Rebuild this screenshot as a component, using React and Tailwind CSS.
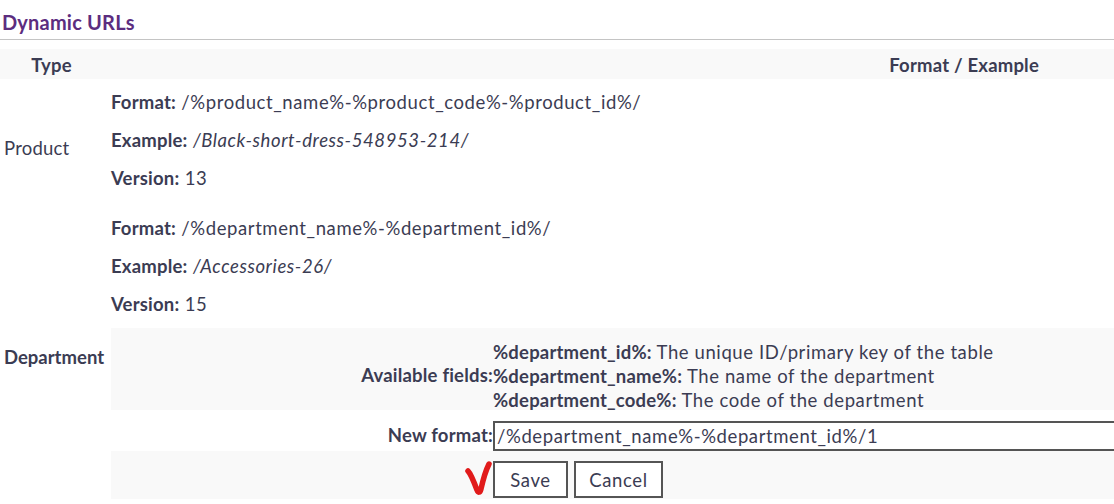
import React from "react";

const labelCls = "font-bold tracking-[0.2px]";

function Line({ label, children }) {
  return (
    <p className="leading-[24px] whitespace-nowrap">
      <span className={labelCls}>{label}</span> {children}
    </p>
  );
}

export default function App() {
  const fields = [
    ["%department_id%", "The unique ID/primary key of the table"],
    ["%department_name%", "The name of the department"],
    ["%department_code%", "The code of the department"],
  ];

  return (
    <div
      className="w-[1114px] h-[504px] overflow-hidden bg-white text-[18.5px] tracking-[0.6px] text-[#3b3c53]"
      style={{ fontFamily: "Lato, 'Noto Sans', sans-serif" }}
    >
      <div className="h-[40px] border-b border-[#c4c4c4] pl-[2px] pt-[9px]">
        <h2 className="text-[20px] font-bold leading-[26px] tracking-[0.2px] text-[#5c2d7f]">Dynamic URLs</h2>
      </div>

      <div className="mt-[9px] h-[30px] bg-[#f9f9f9] flex items-center pt-[4px] font-bold tracking-[0.2px]">
        <div className="w-[103px] shrink-0 text-center">Type</div>
        <div className="flex-1 text-right pr-[75px]">Format / Example</div>
      </div>

      {/* Product row */}
      <div className="flex h-[136px]">
        <div className="w-[107px] shrink-0 pl-[4px] flex items-center pt-[4px] tracking-[0.2px]">Product</div>
        <div className="flex-1 pl-[4px] pt-[11px] flex flex-col gap-[14px]">
          <Line label="Format:">/%product_name%-%product_code%-%product_id%/</Line>
          <Line label="Example:"><i>/Black-short-dress-548953-214/</i></Line>
          <Line label="Version:">13</Line>
        </div>
      </div>

      {/* Department row */}
      <div className="flex">
        <div className="w-[107px] shrink-0 pl-[4px] flex items-center font-bold tracking-[0px] pt-[2px]">Department</div>
        <div className="flex-1 pl-[4px] pt-[1px] flex flex-col">
          <div className="flex flex-col gap-[14px]">
            <Line label="Format:">/%department_name%-%department_id%/</Line>
            <Line label="Example:"><i>/Accessories-26/</i></Line>
            <Line label="Version:">15</Line>
          </div>

          <div className="mt-[12px] flex flex-col">
            <div className="flex bg-[#f9f9f9] h-[82px] pt-[12px]">
              <div className="w-[382px] shrink-0 h-[72px] flex items-center justify-end font-bold tracking-[0.2px]">Available fields:</div>
              <div className="flex flex-col whitespace-nowrap">
                {fields.map(([k, v]) => (
                  <p key={k} className="leading-[24px]">
                    <span className={labelCls}>{k}:</span> {v}
                  </p>
                ))}
              </div>
            </div>

            <div className="flex h-[41px] pt-[11px] items-start">
              <div className="w-[382px] shrink-0 h-[29px] flex items-center justify-end font-bold tracking-[0.2px]">New format:</div>
              <input
                type="text"
                defaultValue="/%department_name%-%department_id%/1"
                className="w-[680px] shrink-0 h-[30px] border-2 border-[#555555] px-[2px] text-[18.5px] tracking-[0.6px] text-[#3b3c53] outline-none"
                style={{ fontFamily: "Lato, 'Noto Sans', sans-serif" }}
              />
            </div>

            <div className="flex bg-[#f9f9f9] h-[48px] pt-[10px]">
              <div className="w-[382px] shrink-0 relative">
                <svg
                  className="absolute -right-[1px] -top-[1px]"
                  width="30"
                  height="36"
                  viewBox="0 0 30 36"
                  fill="none"
                >
                  <path
                    d="M4 11 C7 14 10 22 13 30 C14 33 16 33 17 29 C19 20 22 10 25 4"
                    stroke="#e11b1b"
                    strokeWidth="5.5"
                    strokeLinecap="round"
                    strokeLinejoin="round"
                  />
                </svg>
              </div>
              <div className="flex gap-[6px]">
                <button className="w-[75px] h-[37px] border-2 border-[#555555] bg-white pt-[2px]">Save</button>
                <button className="w-[89px] h-[37px] border-2 border-[#555555] bg-white pt-[2px]">Cancel</button>
              </div>
            </div>
          </div>
        </div>
      </div>
    </div>
  );
}
